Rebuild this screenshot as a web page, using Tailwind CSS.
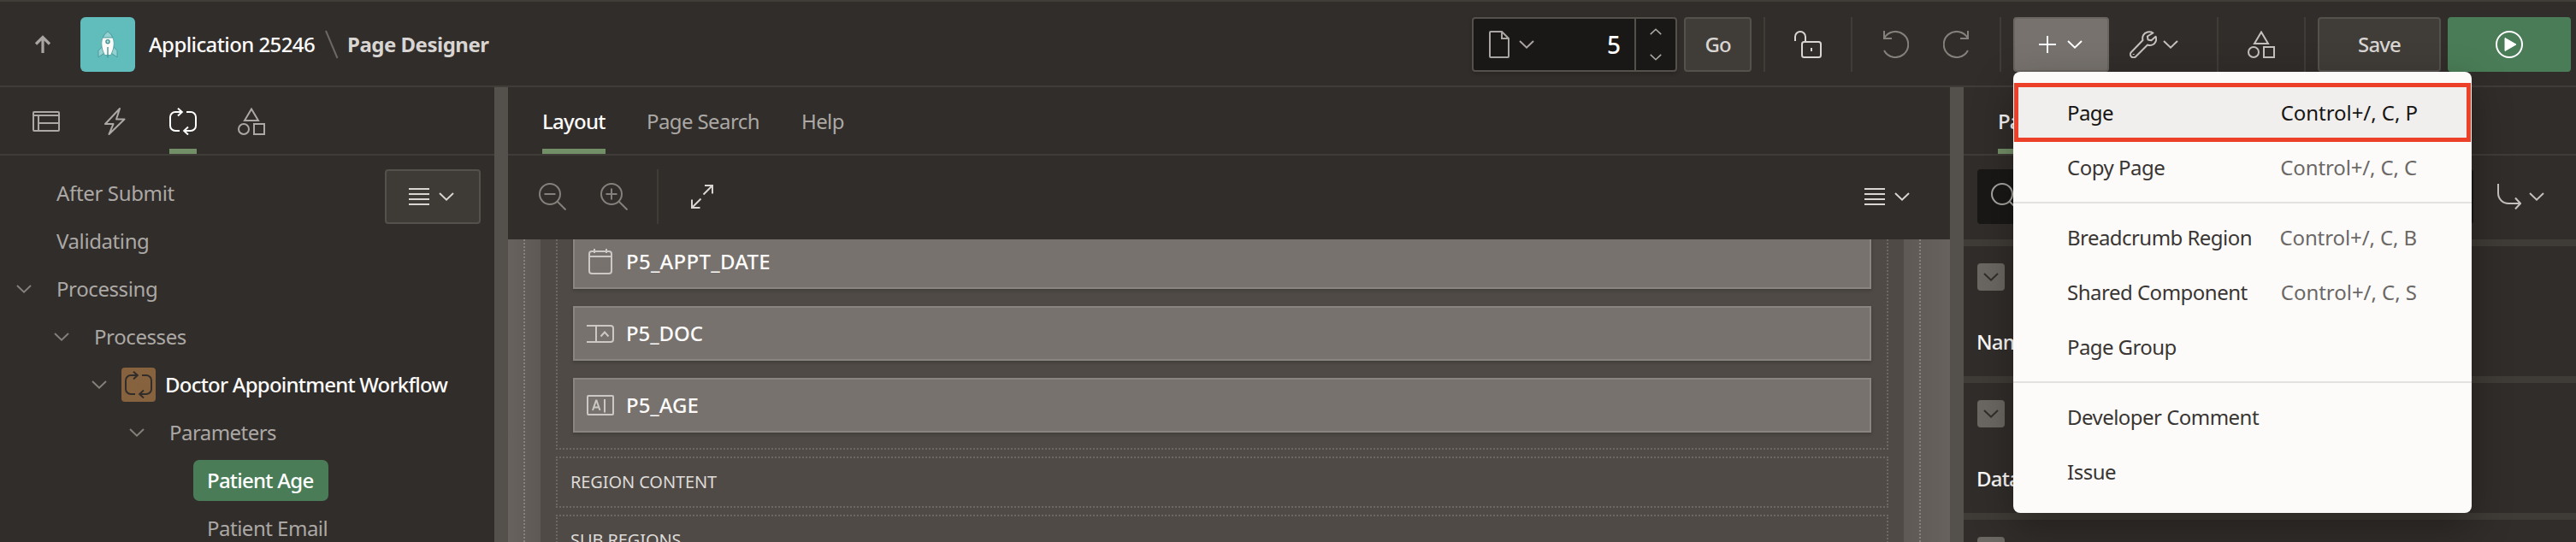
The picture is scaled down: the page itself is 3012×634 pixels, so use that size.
<!DOCTYPE html>
<html lang="en">
<head>
<meta charset="utf-8">
<title>Page Designer</title>
<script src="https://cdn.jsdelivr.net/npm/@tailwindcss/browser@4"></script>
</head>
<body class="relative flex h-[634px] w-[3012px] flex-col overflow-hidden bg-[#312d2a] font-['Noto_Sans',sans-serif] text-[24px] leading-8 text-[#aba8a5]">

<svg class="hidden">
  <symbol id="chev" viewBox="0 0 18 10"><path d="M1 1l8 7.600l8-7.600" fill="none" stroke="currentColor" stroke-width="2"/></symbol>
  <symbol id="lines" viewBox="0 0 24 20"><path d="M0 1h24M0 7h24M0 13h24M0 19h24" fill="none" stroke="currentColor" stroke-width="2"/></symbol>
  <symbol id="cycle" viewBox="0 0 32 32"><g fill="none" stroke="currentColor" stroke-width="2"><path d="M15 5H7a6 6 0 0 0-6 6v10a6 6 0 0 0 6 6h5M20 5h5a6 6 0 0 1 6 6v10a6 6 0 0 1-6 6h-8"/><path d="M10 .7L14.800 5L10 9.500M22 22.500L17.200 27l4.800 4.500"/></g></symbol>
  <symbol id="shapes" viewBox="0 0 32 32"><g fill="none" stroke="currentColor" stroke-width="2"><path d="M16 1.500L8 15h16z"/><circle cx="7" cy="25" r="6"/><path d="M19 19h12v12H19z"/></g></symbol>
  <symbol id="mag" viewBox="0 0 32 32"><g fill="none" stroke="currentColor" stroke-width="2"><circle cx="13" cy="13" r="12"/><path d="M21.500 21.500l10 10"/></g></symbol>
</svg>

<!-- Header -->
<header class="flex h-[102px] shrink-0 border-y-2 border-[#403c38] pt-[18px] pr-[6px]">
  <div class="flex h-16 items-center">
    <svg class="ml-[40px] h-[24px] w-[20px] text-[#a8a5a2]" viewBox="0 0 20 24" fill="none" stroke="currentColor" stroke-width="3.200"><path d="M10 22V4M2 11.500L10 3.500l8 8"/></svg>
    <div class="ml-[34px] flex size-16 items-center justify-center rounded-[6px] bg-[#61bcbc]">
      <svg class="h-8 w-6" viewBox="0 0 24 32">
        <path d="M5 19L1 23.500V31l7-5zM19 19l4 4.500V31l-7-5z" fill="#93d2d1" stroke="#4a9a9a"/>
        <path d="M12 .5C7 4.500 4.500 10 4.800 16c.2 5 2 9 3.700 12.500h7c1.700-3.500 3.500-7.500 3.700-12.500C19.500 10 17 4.500 12 .5z" fill="#fcfbfa" stroke="#4a9a9a" stroke-width=".8"/>
        <path d="M12 .7C9.300 3 7.300 5.300 6.300 8h11.400C16.700 5.300 14.700 3 12 .7z" fill="#93d2d1" stroke="#4a9a9a"/>
        <circle cx="12" cy="12.700" r="2.100" fill="#a7dada" stroke="#3f8f90" stroke-width="1.300"/>
        <path d="M12 19v12.500" stroke="#4a9a9a" stroke-width="1.500"/>
      </svg>
    </div>
    <span class="ml-[16px] w-[194px] font-medium tracking-[-0.6px] whitespace-nowrap text-[#fcfbfa]">Application 25246</span>
    <svg class="ml-[12px] h-[34px] w-[16px]" viewBox="0 0 16 34"><path d="M1 1l13.500 32" stroke="#6c6864" stroke-width="2"/></svg>
    <span class="ml-[10px] font-bold tracking-[-0.5px] whitespace-nowrap text-[#d8d5d2]">Page Designer</span>
  </div>

  <div class="ml-auto flex h-16 items-center">
    <div class="flex h-16 w-[240px] rounded-[4px] border-2 border-[#54504b] bg-[#1a1816] shadow-[0_2px_4px_#0003]">
      <div class="flex flex-1 items-center">
        <svg class="ml-[18px] h-8 w-6" viewBox="0 0 24 32" fill="none" stroke="#a8a5a2" stroke-width="2"><path d="M2 1h13l8 8v21a1 1 0 0 1-1 1H2a1 1 0 0 1-1-1V2a1 1 0 0 1 1-1zM15 1v8h8"/></svg>
        <svg class="ml-[11px] h-[10px] w-[18px] text-[#a8a5a2]"><use href="#chev"/></svg>
        <span class="mr-[16px] ml-auto text-[28px] font-medium text-white">5</span>
      </div>
      <div class="flex w-[48px] flex-col items-center justify-between border-l-2 border-[#54504b] py-[11px]">
        <svg class="h-[8px] w-[14px] rotate-180"><use href="#chev"/></svg>
        <svg class="h-[8px] w-[14px]"><use href="#chev"/></svg>
      </div>
    </div>
    <div class="ml-2 flex h-16 w-[79px] items-center justify-center rounded-[4px] border-2 border-[#54504b] bg-[#403c37] font-medium tracking-[-1px] text-[#d8d5d2]">Go</div>
    <div class="ml-[14px] h-16 w-[2px] bg-[#403c38]"></div>
    <svg class="ml-[34px] size-8" viewBox="0 0 32 32" fill="none" stroke="#d8d5d2" stroke-width="2"><rect x="9" y="13" width="22" height="18" rx="2.500"/><path d="M1 12V7a6 6 0 0 1 12 0v6M20 20v4"/></svg>
    <div class="ml-[34px] h-16 w-[2px] bg-[#403c38]"></div>
    <svg class="ml-[34px] size-8" viewBox="0 0 32 32" fill="none" stroke="#84807c" stroke-width="2"><path d="M3 0v9h9M3 9A15 15 0 1 1 3 23"/></svg>
    <svg class="ml-[40px] size-8" viewBox="0 0 32 32" fill="none" stroke="#84807c" stroke-width="2"><path d="M29 0v9h-9M29 9A15 15 0 1 0 29 23"/></svg>
    <div class="ml-[34px] h-16 w-[2px] bg-[#403c38]"></div>
    <div class="ml-[14px] flex h-16 w-[112px] items-center rounded-[4px] border-2 border-[#6a655f] bg-[#77726d] pl-[28px] text-white">
      <svg class="size-5" viewBox="0 0 20 20" fill="none" stroke="currentColor" stroke-width="2"><path d="M10 0v20M0 10h20"/></svg>
      <svg class="ml-[13px] h-[10px] w-[18px]"><use href="#chev"/></svg>
    </div>
    <svg class="ml-[24px] size-8" viewBox="0 0 32 32" fill="none" stroke="#c4c1be" stroke-width="2" stroke-linejoin="round"><path d="M27.500 2.500C23.500 0 18 1.300 16 5.300c-1 2-1 4-.5 5.700L2 25a3.600 3.600 0 0 0 5.200 5.200L21 16.500c4 1.300 8-.3 9.600-4 .8-2 .7-4-.1-5.700L25.500 11.200l-4-.8-.6-3.900z"/><path d="M4.700 27v1"/></svg>
    <svg class="ml-[7px] h-[10px] w-[18px] text-[#c4c1be]"><use href="#chev"/></svg>
    <div class="ml-[45px] h-16 w-[2px] bg-[#403c38]"></div>
    <svg class="ml-[34px] size-8 text-[#c4c1be]"><use href="#shapes"/></svg>
    <div class="ml-[34px] h-16 w-[2px] bg-[#403c38]"></div>
    <div class="ml-[14px] flex h-16 w-[144px] items-center justify-center rounded-[4px] border-2 border-[#54504b] bg-[#403c37] font-medium tracking-[-0.9px] text-[#d8d5d2]">Save</div>
    <div class="ml-2 flex h-16 w-[144px] items-center justify-center rounded-[4px] bg-[#4a7d57]">
      <svg class="size-8" viewBox="0 0 32 32"><circle cx="16" cy="16" r="15" fill="none" stroke="#fff" stroke-width="2"/><path d="M11 8.500v15L24 16z" fill="#fff" stroke="#fff" stroke-width="1" stroke-linejoin="round"/></svg>
    </div>
  </div>
</header>

<main class="flex min-h-0 flex-1 overflow-hidden">
  <!-- Processing tree -->
  <section class="w-[578px] shrink-0 overflow-hidden">
    <nav class="flex h-[80px] gap-[48px] border-b-2 border-[#403c38] pl-[38px]">
      <svg class="mt-6 size-8" viewBox="0 0 32 32" fill="none" stroke="currentColor" stroke-width="2"><rect x="1" y="5" width="30" height="22" rx="1"/><path d="M1 9h30M7 9v18M7 18h24"/></svg>
      <svg class="mt-6 size-8" viewBox="0 0 32 32" fill="none" stroke="currentColor" stroke-width="2" stroke-linejoin="round"><path d="M22 1L5 19h9.500L9.500 31L27.500 13.500h-9.500z"/></svg>
      <div class="flex h-[78px] flex-col border-b-6 border-[#738f68] pt-6"><svg class="size-8 text-white"><use href="#cycle"/></svg></div>
      <svg class="mt-6 size-8"><use href="#shapes"/></svg>
    </nav>
    <div class="flex justify-between pt-4 pr-4">
      <div class="flex flex-col whitespace-nowrap">
        <div class="flex h-14 items-center pl-[66px] tracking-[-0.35px]">After Submit</div>
        <div class="flex h-14 items-center pl-[66px] tracking-[-0.4px]">Validating</div>
        <div class="flex h-14 items-center pl-[19px] tracking-[-0.4px]"><svg class="mr-[29px] h-[10px] w-[18px] text-[#84807c]"><use href="#chev"/></svg>Processing</div>
        <div class="flex h-14 items-center pl-[63px] tracking-[-0.4px]"><svg class="mr-[29px] h-[10px] w-[18px] text-[#84807c]"><use href="#chev"/></svg>Processes</div>
        <div class="flex h-14 items-center pl-[107px] font-medium tracking-[-0.78px] text-[#fcfbfa]"><svg class="mr-[17px] h-[10px] w-[18px] text-[#84807c]"><use href="#chev"/></svg><span class="mr-[11px] flex size-10 items-center justify-center rounded-[4px] bg-[#87623f] text-[#312d2a]"><svg class="size-8"><use href="#cycle"/></svg></span>Doctor Appointment Workflow</div>
        <div class="flex h-14 items-center pl-[151px] tracking-[-0.55px]"><svg class="mr-[29px] h-[10px] w-[18px] text-[#84807c]"><use href="#chev"/></svg>Parameters</div>
        <div class="flex h-14 items-center pl-[226px]"><span class="flex h-12 w-[158px] items-center rounded-[7px] bg-[#4a7d57] pl-4 font-medium tracking-[-0.75px] text-white">Patient Age</span></div>
        <div class="flex h-14 items-center pl-[242px] tracking-[-0.5px]">Patient Email</div>
      </div>
      <div class="-ml-20 flex h-16 w-[112px] shrink-0 items-center rounded-[4px] border-2 border-[#54504b] bg-[#3e3a35] pl-[26px] text-[#d8d5d2]">
        <svg class="h-5 w-6"><use href="#lines"/></svg><svg class="ml-[11px] h-[10px] w-[18px]"><use href="#chev"/></svg>
      </div>
    </div>
  </section>
  <div class="w-4 shrink-0 bg-[#54504b]"></div>

  <!-- Layout canvas -->
  <section class="flex w-[1686px] shrink-0 flex-col">
    <nav class="flex h-[80px] shrink-0 gap-[48px] border-b-2 border-[#403c38] pl-10 leading-[80px]">
      <div class="h-[78px] w-[74px] border-b-6 border-[#738f68] font-medium tracking-[-0.75px] text-[#fcfbfa]">Layout</div>
      <div class="w-[133px] tracking-[-0.6px] whitespace-nowrap">Page Search</div>
      <div class="tracking-[-0.6px]">Help</div>
    </nav>
    <div class="flex h-[98px] shrink-0 items-center pb-[2px] pl-9">
      <div class="flex h-16 w-full items-center">
        <svg class="size-8 text-[#84807c]" viewBox="0 0 32 32"><use href="#mag"/><path d="M6.500 13h13" stroke="currentColor" stroke-width="2"/></svg>
        <svg class="ml-10 size-8 text-[#84807c]" viewBox="0 0 32 32"><use href="#mag"/><path d="M6.500 13h13M13 6.500v13" stroke="currentColor" stroke-width="2"/></svg>
        <div class="ml-[34px] h-16 w-[2px] bg-[#403c38]"></div>
        <svg class="ml-[38px] h-[28px] w-[26px]" viewBox="0 0 26 28" fill="none" stroke="#d8d5d2" stroke-width="2"><path d="M14.500 11.500L25 1M16 1h9v9.500M11.500 16.500L1 27M1 17.500V27h9.500"/></svg>
        <svg class="ml-auto h-5 w-6 text-[#d8d5d2]"><use href="#lines"/></svg><svg class="mr-[47px] ml-[11px] h-[10px] w-[18px] text-[#d8d5d2]"><use href="#chev"/></svg>
      </div>
    </div>
    <div class="flex min-h-0 flex-1 justify-between overflow-hidden bg-[#4f4a46]">
      <div class="w-[38px] shrink-0 bg-linear-to-r from-[#67625d] to-[#5e5954] pl-[18px]"><div class="h-full border-l-2 border-dotted border-[#86817c]"></div></div>
      <div class="flex w-[1558px] shrink-0 flex-col gap-2">
        <div class="-mt-[8px] flex h-[254px] shrink-0 flex-col gap-5 border-2 border-dotted border-[#6d6863] px-[18px] text-[#fcfbfa]">
          <div class="flex h-16 shrink-0 items-center border-2 border-[#8a8580] bg-[#77726d] pl-[14px] font-medium tracking-[0.28px] shadow-[0_2px_4px_#0003]"><svg class="mr-[14px] size-8" viewBox="0 0 32 32" fill="none" stroke="#cbc8c5" stroke-width="2"><rect x="3" y="4" width="26" height="26" rx="3"/><path d="M3 10h26M9 1v5M23 1v5"/></svg>P5_APPT_DATE</div>
          <div class="flex h-16 shrink-0 items-center border-2 border-[#8a8580] bg-[#77726d] pl-[14px] font-medium tracking-[-0.1px] shadow-[0_2px_4px_#0003]"><svg class="mr-[14px] size-8" viewBox="0 0 32 32" fill="none" stroke="#cbc8c5" stroke-width="2"><path d="M0 7h28a3 3 0 0 1 3 3v13a3 3 0 0 1-3 3H0M11 7v19M16.500 19.500l4.500-5l4.500 5"/></svg>P5_DOC</div>
          <div class="flex h-16 shrink-0 items-center border-2 border-[#8a8580] bg-[#77726d] pl-[14px] font-medium tracking-[0px] shadow-[0_2px_4px_#0003]"><svg class="mr-[14px] size-8" viewBox="0 0 32 32" fill="none" stroke="#cbc8c5" stroke-width="2"><rect x="1" y="5" width="30" height="22" rx="1"/><path d="M7 22l4-11.500h.5l4 11.500M8.500 18.500h6M21 9v15.500"/></svg>P5_AGE</div>
        </div>
        <div class="flex h-[60px] shrink-0 items-center border-2 border-dotted border-[#6d6863] pl-[15px] text-[20px] tracking-[-0.1px] text-[#dedbd8]">REGION CONTENT</div>
        <div class="flex h-[60px] shrink-0 items-center border-2 border-dotted border-[#6d6863] pl-[15px] text-[20px] tracking-[-0.1px] text-[#dedbd8]">SUB REGIONS</div>
      </div>
      <div class="w-[54px] shrink-0 bg-linear-to-r from-[#5e5954] to-[#67625d] pl-[18px]"><div class="h-full border-l-2 border-dotted border-[#86817c]"></div></div>
    </div>
  </section>
  <div class="w-4 shrink-0 bg-[#54504b]"></div>

  <!-- Property editor -->
  <section class="flex min-w-0 flex-1 flex-col font-medium text-[#fcfbfa]">
    <nav class="flex h-[80px] shrink-0 border-b-2 border-[#403c38] pl-10 leading-[80px]">
      <div class="h-[78px] border-b-6 border-[#738f68] tracking-[-0.9px]">Parameter</div>
    </nav>
    <div class="flex h-[98px] shrink-0 items-center pb-[2px] pl-4">
      <div class="flex h-16 w-[580px] items-center rounded-[4px] bg-[#1a1816] pl-4"><svg class="size-8 text-[#a8a5a2]"><use href="#mag"/></svg></div>
      <svg class="ml-[28px] h-[30px] w-[28px]" viewBox="0 0 28 30" fill="none" stroke="#c4c1be" stroke-width="2"><path d="M1 0v11A12 12 0 0 0 13 23h13M21 16.500l6 6.500l-6 6.500"/></svg>
      <svg class="ml-[9px] h-[10px] w-[18px] text-[#c4c1be]"><use href="#chev"/></svg>
    </div>
    <div class="h-[160px] shrink-0 border-t-8 border-[#3f3b36] pt-5 pl-4">
      <div class="flex size-8 items-center justify-center rounded-[4px] bg-[#6b6762] text-[#312d2a]"><svg class="h-[10px] w-[18px]"><use href="#chev"/></svg></div>
      <div class="mt-[44px] -ml-px tracking-[-0.8px]">Name</div>
    </div>
    <div class="h-[160px] shrink-0 border-t-8 border-[#3f3b36] pt-5 pl-4">
      <div class="flex size-8 items-center justify-center rounded-[4px] bg-[#6b6762] text-[#312d2a]"><svg class="h-[10px] w-[18px]"><use href="#chev"/></svg></div>
      <div class="mt-[44px] -ml-px tracking-[-0.8px]">Data Type</div>
    </div>
    <div class="h-[160px] shrink-0 border-t-8 border-[#3f3b36] pt-5 pl-4">
      <div class="flex h-8 items-center gap-4"><div class="flex size-8 items-center justify-center rounded-[4px] bg-[#6b6762] text-[#312d2a]"><svg class="h-[10px] w-[18px]"><use href="#chev"/></svg></div><span class="font-bold">Value</span></div>
    </div>
  </section>
</main>

<!-- Create menu -->
<div class="absolute top-[84px] left-[2354px] flex h-[516px] w-[536px] flex-col rounded-[8px] bg-[#fcfbfa] py-[13px] whitespace-nowrap text-[#393532] shadow-[0_16px_48px_#00000052]">
  <div class="mx-px flex h-[69px] shrink-0 items-center justify-between border-5 border-[#ec4128] bg-[#f0efed] pr-[57px] pl-[57px] text-[#161513]"><span class="tracking-[-0.6px]">Page</span><span class="tracking-[-0.05px]">Control+/, C, P</span></div>
  <div class="-mt-[2px] flex h-16 shrink-0 items-center justify-between pr-16 pl-[63px]"><span class="tracking-[-0.5px]">Copy Page</span><span class="tracking-[-0.13px] text-[#6b6866]">Control+/, C, C</span></div>
  <div class="my-2 h-[2px] shrink-0 bg-[#e2e1df]"></div>
  <div class="flex h-16 shrink-0 items-center justify-between pr-16 pl-[63px]"><span class="tracking-[-0.55px]">Breadcrumb Region</span><span class="tracking-[-0.1px] text-[#6b6866]">Control+/, C, B</span></div>
  <div class="flex h-16 shrink-0 items-center justify-between pr-16 pl-[63px]"><span class="tracking-[-0.5px]">Shared Component</span><span class="tracking-[-0.03px] text-[#6b6866]">Control+/, C, S</span></div>
  <div class="flex h-16 shrink-0 items-center pl-[63px] tracking-[-0.6px]">Page Group</div>
  <div class="my-2 h-[2px] shrink-0 bg-[#e2e1df]"></div>
  <div class="flex h-16 shrink-0 items-center pl-[63px] tracking-[-0.53px]">Developer Comment</div>
  <div class="flex h-16 shrink-0 items-center pl-[63px] tracking-[-0.5px]">Issue</div>
</div>
</body>
</html>
